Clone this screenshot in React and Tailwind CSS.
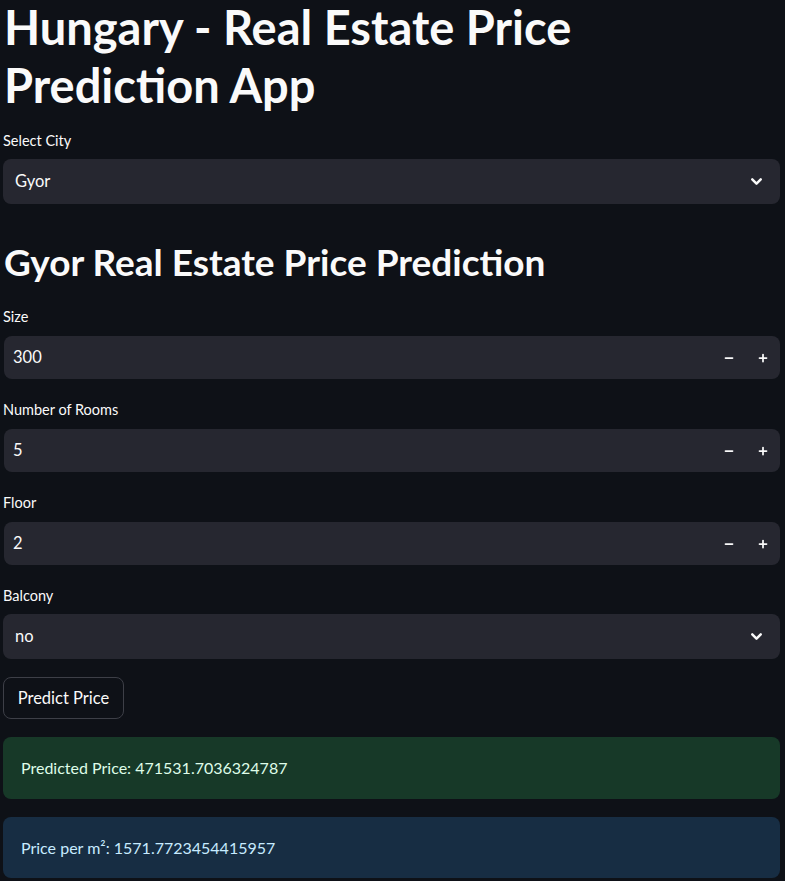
import { ChevronDown, Minus, Plus } from 'lucide-react';

const font = { fontFamily: 'Lato, "Source Sans Pro", sans-serif' };

const Label = ({ children }) => (
  <div className="h-[22px] text-[14.5px] leading-[22px] text-[#fafafa]">{children}</div>
);

const SelectBox = ({ value }) => (
  <div className="mt-[7px] flex h-[45px] items-center justify-between rounded-lg bg-[#262730] pl-[12px] pr-[15px] text-[16.5px] text-[#fafafa]">
    <span>{value}</span>
    <ChevronDown size={17} strokeWidth={3.5} className="text-[#fafafa]" />
  </div>
);

const NumberBox = ({ value }) => (
  <div className="mt-[8px] ml-[1px] flex h-[43px] items-center justify-between rounded-lg bg-[#262730] pl-[9px] text-[16.5px] text-[#fafafa]">
    <span>{value}</span>
    <div className="flex h-full items-center">
      <button className="flex h-full w-[34px] items-center justify-center text-[#fafafa]">
        <Minus size={12} strokeWidth={3.5} />
      </button>
      <button className="flex h-full w-[34px] items-center justify-center text-[#fafafa]">
        <Plus size={12} strokeWidth={3.5} />
      </button>
    </div>
  </div>
);

const App = () => {
  return (
    <div className="min-h-screen bg-[#0e1117] pl-[3px] pr-[5px]" style={font}>
      {/* Title */}
      <h1 className="-mt-[2px] pl-[1px] text-[47px] font-bold leading-[58px] text-[#fafafa]">
        Hungary - Real Estate Price
        <br />
        Prediction App
      </h1>

      <div className="mt-[16px]">
        <Label>Select City</Label>
        <SelectBox value="Gyor" />
      </div>

      <h2 className="mt-[36px] pl-[1px] text-[37px] font-bold leading-[44px] text-[#fafafa]">
        Gyor Real Estate Price Prediction
      </h2>

      <div className="mt-[22px]">
        <Label>Size</Label>
        <NumberBox value="300" />
      </div>

      <div className="mt-[20px]">
        <Label>Number of Rooms</Label>
        <NumberBox value="5" />
      </div>

      <div className="mt-[20px]">
        <Label>Floor</Label>
        <NumberBox value="2" />
      </div>

      <div className="mt-[20px]">
        <Label>Balcony</Label>
        <SelectBox value="no" />
      </div>

      <button className="mt-[18px] block h-[42px] w-[121px] rounded-lg border border-[#3d3f47] bg-[#0e1117] text-[16.5px] text-[#fafafa]">
        Predict Price
      </button>

      <div className="mt-[18px] flex h-[62px] items-center rounded-lg bg-[#173928] px-[18px] text-[16px] text-[#dffde9]">
        Predicted Price: 471531.7036324787
      </div>

      <div className="mt-[18px] flex h-[61px] items-center rounded-lg bg-[#172d43] px-[18px] text-[16px] text-[#c7ebff]">
        Price per m²: 1571.7723454415957
      </div>
    </div>
  );
};

export default App;
